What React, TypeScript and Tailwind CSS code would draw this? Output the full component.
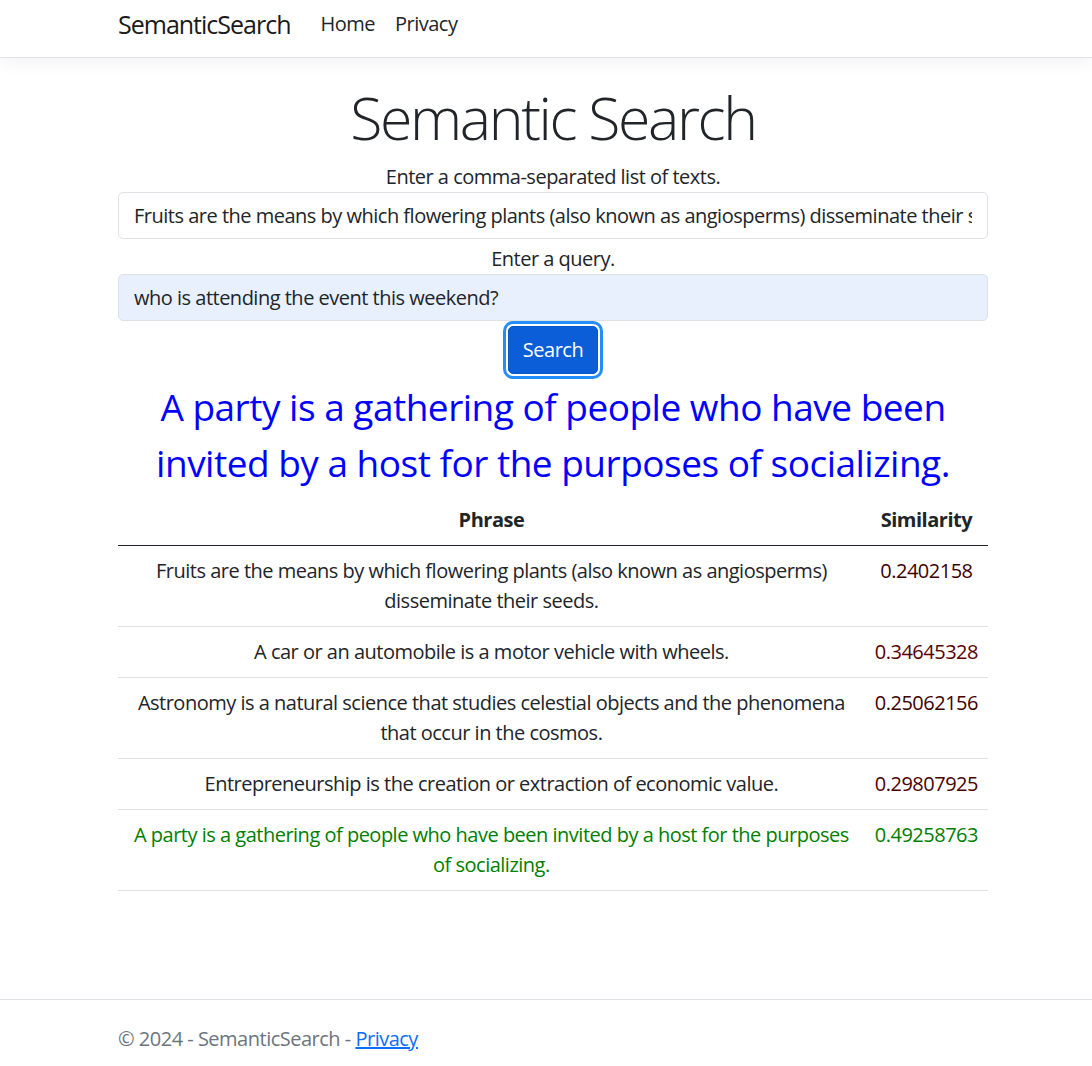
const FRUITS =
  "Fruits are the means by which flowering plants (also known as angiosperms) disseminate their seeds.";
const QUERY = "who is attending the event this weekend?";

const rows = [
  { phrase: FRUITS, score: "0.2402158", color: "text-[#3d0000]" },
  { phrase: "A car or an automobile is a motor vehicle with wheels.", score: "0.34645328", color: "text-[#580000]" },
  {
    phrase: "Astronomy is a natural science that studies celestial objects and the phenomena that occur in the cosmos.",
    score: "0.25062156",
    color: "text-[#400000]",
  },
  { phrase: "Entrepreneurship is the creation or extraction of economic value.", score: "0.29807925", color: "text-[#4c0000]" },
  {
    phrase: "A party is a gathering of people who have been invited by a host for the purposes of socializing.",
    score: "0.49258763",
    color: "text-[#008000]",
    best: true,
  },
];

export default function App() {
  return (
    <div className="min-h-[1077px] flex flex-col bg-white text-[#212529] font-['Open_Sans',sans-serif] text-[20px] leading-[30px] tracking-[-0.025em]">
      {/* navbar */}
      <header className="h-[58px] border-b border-[#dee2e6] bg-white shadow-[0_5px_15px_rgba(0,0,0,0.05)]">
        <nav className="w-[870px] ml-[118px] h-[48px] flex items-center">
          <a href="#" className="text-[25px] tracking-[-0.04em] text-[#1a1a1a] mr-[20px]">
            SemanticSearch
          </a>
          <a href="#" className="px-[10px] text-[#212529]">
            Home
          </a>
          <a href="#" className="px-[10px] text-[#212529]">
            Privacy
          </a>
        </nav>
      </header>

      <main className="w-[870px] ml-[118px] flex-1 text-center">
        <h1 className="mt-[24px] text-[59px] leading-[71px] font-light tracking-[-0.04em]">Semantic Search</h1>

        <div className="mt-[9px]">
          <label className="block">Enter a comma-separated list of texts.</label>
          <input
            readOnly
            value={FRUITS}
            className="block w-full h-[47px] px-[15px] border border-[#dee2e6] rounded-[5px] bg-white outline-none"
          />
          <label className="block mt-[5px]">Enter a query.</label>
          <input
            readOnly
            value={QUERY}
            className="block w-full h-[47px] px-[15px] border border-[#dee2e6] rounded-[5px] bg-[#e8f0fe] outline-none"
          />
          <button className="mt-[5px] h-[48px] px-[14px] rounded-[5px] bg-[#0b5ed7] border border-[#0a58ca] text-white shadow-[0_0_0_2px_white,0_0_0_5px_#258cfb]">
            Search
          </button>
        </div>

        <p className="mt-[5px] text-[37px] leading-[56px] text-[#0000ff]">
          A party is a gathering of people who have been invited by a host for the purposes of socializing.
        </p>

        <table className="w-full mt-[4px] border-collapse">
          <thead>
            <tr className="border-b border-[#212529]">
              <th className="py-[10px] px-[10px] font-bold">Phrase</th>
              <th className="py-[10px] px-[10px] font-bold w-[122px]">Similarity</th>
            </tr>
          </thead>
          <tbody>
            {rows.map((r) => (
              <tr key={r.score} className="border-b border-[#dee2e6] align-top">
                <td className={`py-[10px] px-[10px] ${r.best ? "text-[#008000]" : ""}`}>{r.phrase}</td>
                <td className={`py-[10px] px-[10px] ${r.color}`}>{r.score}</td>
              </tr>
            ))}
          </tbody>
        </table>
      </main>

      <footer className="border-t border-[#dee2e6] text-[#6c757d] leading-[77px]">
        <div className="w-[870px] ml-[118px]">
          © 2024 - SemanticSearch -{" "}
          <a href="#" className="text-[#0d6efd] underline">
            Privacy
          </a>
        </div>
      </footer>
    </div>
  );
}
